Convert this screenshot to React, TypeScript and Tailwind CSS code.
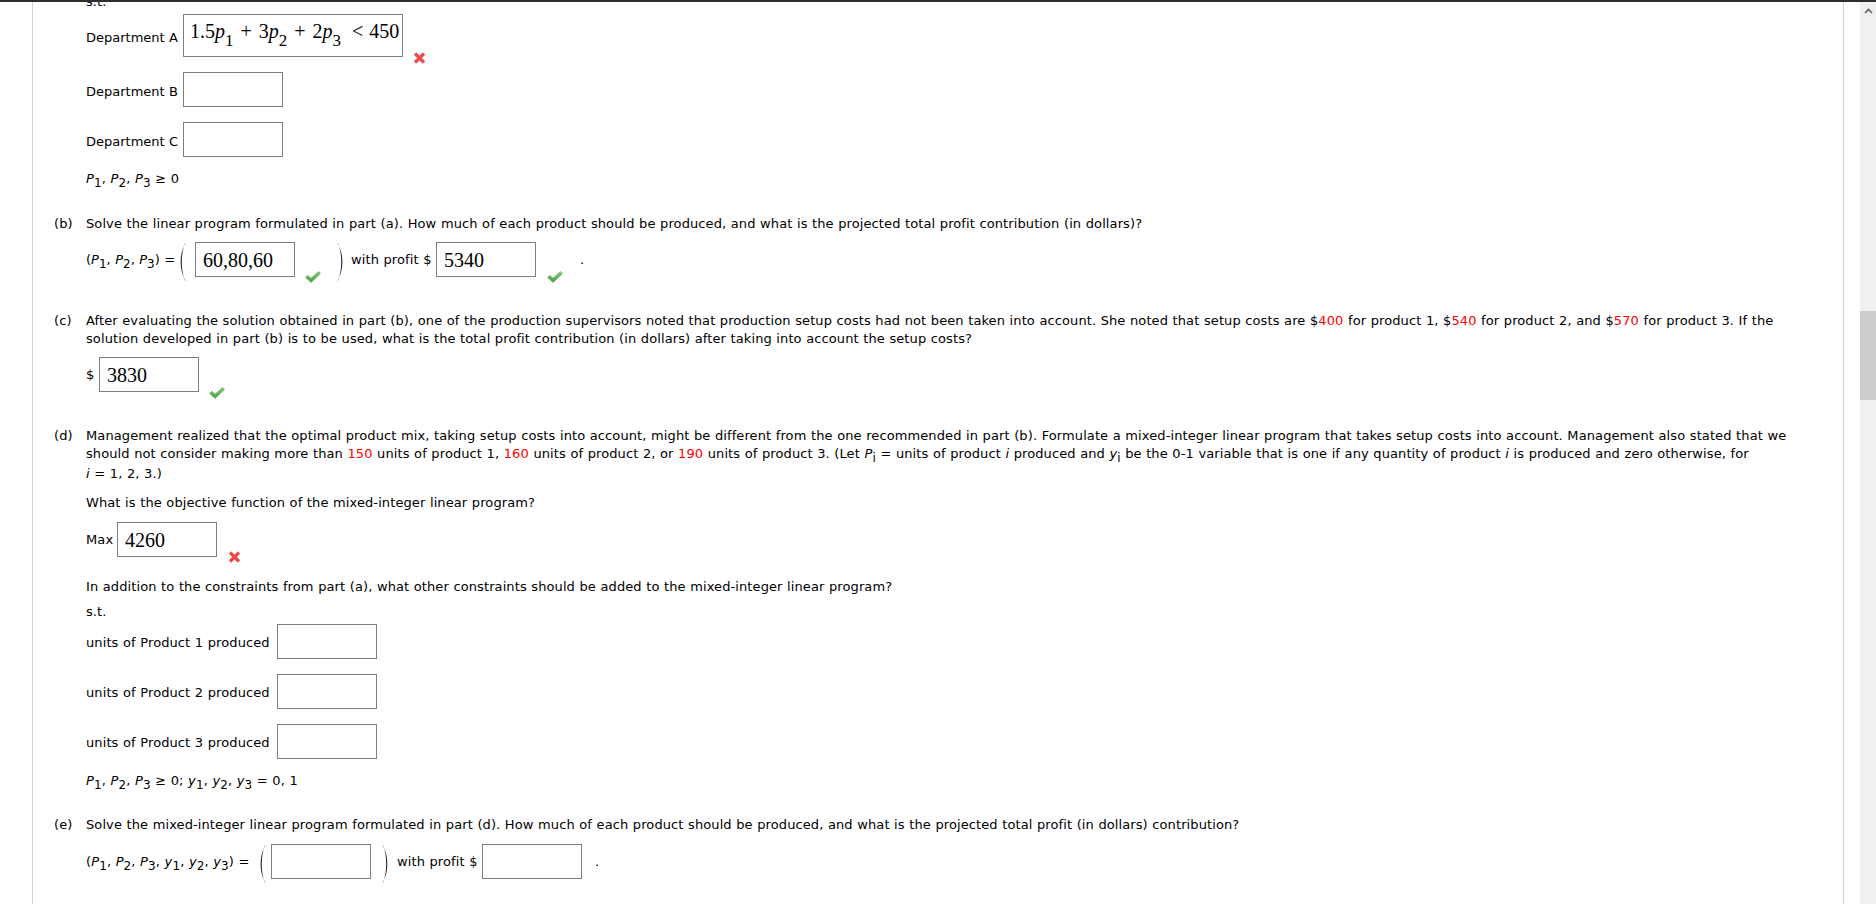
import React from "react";

// ─── small bits ───────────────────────────────────────────────
function Sub({ children }: { children: React.ReactNode }) {
  return <span className="relative top-[4px] text-[12px] leading-none not-italic">{children}</span>;
}

function V({ v, s }: { v: string; s: string }) {
  return (
    <>
      <i>{v}</i>
      <Sub>{s}</Sub>
    </>
  );
}

function Red({ children }: { children: React.ReactNode }) {
  return <span className="text-[#ff0000]">{children}</span>;
}

function Box({ children }: { children?: React.ReactNode }) {
  return (
    <div className="w-[100px] h-[35px] shrink-0 border border-[#7f7f7f] flex items-center pl-[7px] font-['Liberation_Serif',serif] text-[20px] leading-[20px] tracking-normal [word-spacing:0] whitespace-nowrap">
      {children}
    </div>
  );
}

function Check({ className }: { className?: string }) {
  return (
    <svg width="16" height="12" viewBox="0 0 16 12" className={className}>
      <defs>
        <linearGradient id="chk" x1="0" y1="0" x2="0" y2="1">
          <stop offset="0" stopColor="#86cf76" />
          <stop offset="1" stopColor="#45a03f" />
        </linearGradient>
      </defs>
      <path d="M0.6 6.4 L2.9 4.3 L6 7.2 L13.6 0.4 L15.6 2.4 L6.1 11.6 Z" fill="url(#chk)" stroke="#4f9f48" strokeWidth="0.5" />
    </svg>
  );
}

function Cross({ className }: { className?: string }) {
  return (
    <svg width="13" height="12" viewBox="0 0 13 12" className={className}>
      <path d="M2 1.5 L11 10.5 M11 1.5 L2 10.5" stroke="#ea4a4a" strokeWidth="3.2" fill="none" />
    </svg>
  );
}

function LeftParen({ className }: { className?: string }) {
  return (
    <svg width="8" height="38" viewBox="0 0 8 38" className={className}>
      <path d="M7.5 0.5 C1 10 1 28 7.5 37.5 L7 37.5 C2.7 28 2.7 10 7 0.5 Z" fill="#222" />
    </svg>
  );
}

function RightParen({ className }: { className?: string }) {
  return (
    <svg width="8" height="38" viewBox="0 0 8 38" className={className}>
      <path d="M0.5 0.5 C7 10 7 28 0.5 37.5 L1 37.5 C5.3 28 5.3 10 1 0.5 Z" fill="#222" />
    </svg>
  );
}

function MathSub({ children }: { children: React.ReactNode }) {
  return <span className="relative top-[8px] text-[17px] leading-none">{children}</span>;
}

// ─── page ─────────────────────────────────────────────────────
export default function App() {
  return (
    <div className="w-[1876px] h-[904px] overflow-hidden bg-white flex flex-col font-['DejaVu_Sans',Verdana,sans-serif] text-[13px] tracking-[0.1px] [word-spacing:0.3px] text-black">
      <div className="h-[2px] shrink-0 bg-[#2b2d33]" />
      <div className="flex flex-1 min-h-0">
        <div className="w-[32px] shrink-0" />
        <main className="w-[1812px] shrink-0 border-x border-l-[#d4d4d4] border-r-[#d0d0d0] pl-[21px] overflow-hidden">
          <div className="ml-[32px] mt-[-9px] h-[18px] leading-[18px]">s.t.</div>

          {/* department constraints */}
          <div className="ml-[32px] mt-[3px] flex items-center h-[43px]">
            <span className="w-[97px] shrink-0 pr-[6px] pt-[4px] text-right whitespace-nowrap leading-[18px] tracking-normal">Department A</span>
            <div className="w-[220px] h-[43px] shrink-0 border border-[#7f7f7f] pl-[6px] pt-[6px] font-['Liberation_Serif',serif] text-[20px] leading-[20px] tracking-normal [word-spacing:0] whitespace-nowrap">
              1.5<i>p</i>
              <MathSub>1</MathSub>
              <span className="mx-[7px]">+</span>3<i>p</i>
              <MathSub>2</MathSub>
              <span className="mx-[7px]">+</span>2<i>p</i>
              <MathSub>3</MathSub>
              <span className="ml-[11px] mr-[6px]">&lt;</span>450
            </div>
            <Cross className="self-end ml-[10px] -mb-[7px]" />
          </div>

          <div className="ml-[32px] mt-[15px] flex items-center h-[35px]">
            <span className="w-[97px] shrink-0 pr-[6px] pt-[4px] text-right whitespace-nowrap leading-[18px] tracking-normal">Department B</span>
            <Box />
          </div>

          <div className="ml-[32px] mt-[15px] flex items-center h-[35px]">
            <span className="w-[97px] shrink-0 pr-[6px] pt-[4px] text-right whitespace-nowrap leading-[18px] tracking-normal">Department C</span>
            <Box />
          </div>

          <div className="ml-[32px] mt-[13px] h-[18px] leading-[18px] whitespace-nowrap">
            <V v="P" s="1" />, <V v="P" s="2" />, <V v="P" s="3" /> ≥ 0
          </div>

          {/* (b) */}
          <div className="mt-[27px] flex">
            <span className="w-[32px] shrink-0 leading-[18px]">(b)</span>
            <div className="flex flex-col">
              <div className="h-[18px] leading-[18px] whitespace-nowrap">
                Solve the linear program formulated in part (a). How much of each product should be produced, and what is the projected total profit contribution (in dollars)?
              </div>
              <div className="mt-[9px] flex items-center h-[35px]">
                <span className="w-[92px] shrink-0 whitespace-nowrap leading-[18px] tracking-normal">
                  (<V v="P" s="1" />, <V v="P" s="2" />, <V v="P" s="3" />) =
                </span>
                <LeftParen className="self-start mt-[1px] mr-[9px] shrink-0" />
                <Box>60,80,60</Box>
                <Check className="self-end ml-[10px] -mb-[6px] shrink-0" />
                <RightParen className="self-start mt-[1px] ml-[16px] mr-[6px] shrink-0" />
                <span className="w-[85px] shrink-0 whitespace-nowrap leading-[18px]">with profit $</span>
                <Box>5340</Box>
                <Check className="self-end ml-[11px] -mb-[6px] shrink-0" />
                <span className="ml-[17px] leading-[18px]">.</span>
              </div>
            </div>
          </div>

          {/* (c) */}
          <div className="mt-[35px] flex">
            <span className="w-[32px] shrink-0 leading-[18px]">(c)</span>
            <div className="flex flex-col">
              <div className="h-[18px] leading-[18px] whitespace-nowrap">
                After evaluating the solution obtained in part (b), one of the production supervisors noted that production setup costs had not been taken into account. She noted that setup costs are $<Red>400</Red> for product 1, $<Red>540</Red> for product 2, and $<Red>570</Red> for product 3. If the
              </div>
              <div className="h-[18px] leading-[18px] whitespace-nowrap">
                solution developed in part (b) is to be used, what is the total profit contribution (in dollars) after taking into account the setup costs?
              </div>
              <div className="mt-[9px] flex items-center h-[35px]">
                <span className="w-[13px] shrink-0 leading-[18px]">$</span>
                <Box>3830</Box>
                <Check className="self-end ml-[10px] -mb-[7px] shrink-0" />
              </div>
            </div>
          </div>

          {/* (d) */}
          <div className="mt-[35px] flex">
            <span className="w-[32px] shrink-0 leading-[18px]">(d)</span>
            <div className="flex flex-col">
              <div className="h-[18px] leading-[18px] whitespace-nowrap">
                Management realized that the optimal product mix, taking setup costs into account, might be different from the one recommended in part (b). Formulate a mixed-integer linear program that takes setup costs into account. Management also stated that we
              </div>
              <div className="h-[20px] leading-[18px] whitespace-nowrap">
                should not consider making more than <Red>150</Red> units of product 1, <Red>160</Red> units of product 2, or <Red>190</Red> units of product 3. (Let <V v="P" s="i" /> = units of product <i>i</i> produced and <V v="y" s="i" /> be the 0-1 variable that is one if any quantity of product <i>i</i> is produced and zero otherwise, for
              </div>
              <div className="h-[18px] leading-[18px] whitespace-nowrap">
                <i>i</i> = 1, 2, 3.)
              </div>

              <div className="mt-[11px] h-[18px] leading-[18px] whitespace-nowrap">
                What is the objective function of the mixed-integer linear program?
              </div>
              <div className="mt-[10px] flex items-center h-[35px]">
                <span className="w-[31px] shrink-0 leading-[18px]">Max</span>
                <Box>4260</Box>
                <Cross className="self-end ml-[11px] -mb-[6px] shrink-0" />
              </div>

              <div className="mt-[21px] h-[18px] leading-[18px] whitespace-nowrap">
                In addition to the constraints from part (a), what other constraints should be added to the mixed-integer linear program?
              </div>
              <div className="mt-[7px] h-[18px] leading-[18px]">s.t.</div>

              <div className="mt-[3px] flex items-center h-[35px]">
                <span className="w-[191px] shrink-0 pt-[3px] whitespace-nowrap leading-[18px]">units of Product 1 produced</span>
                <Box />
              </div>
              <div className="mt-[15px] flex items-center h-[35px]">
                <span className="w-[191px] shrink-0 pt-[3px] whitespace-nowrap leading-[18px]">units of Product 2 produced</span>
                <Box />
              </div>
              <div className="mt-[15px] flex items-center h-[35px]">
                <span className="w-[191px] shrink-0 pt-[3px] whitespace-nowrap leading-[18px]">units of Product 3 produced</span>
                <Box />
              </div>

              <div className="mt-[13px] h-[18px] leading-[18px] whitespace-nowrap">
                <V v="P" s="1" />, <V v="P" s="2" />, <V v="P" s="3" /> ≥ 0; <V v="y" s="1" />, <V v="y" s="2" />, <V v="y" s="3" /> = 0, 1
              </div>
            </div>
          </div>

          {/* (e) */}
          <div className="mt-[26px] flex">
            <span className="w-[32px] shrink-0 leading-[18px]">(e)</span>
            <div className="flex flex-col">
              <div className="h-[18px] leading-[18px] whitespace-nowrap">
                Solve the mixed-integer linear program formulated in part (d). How much of each product should be produced, and what is the projected total profit (in dollars) contribution?
              </div>
              <div className="mt-[10px] flex items-center h-[35px]">
                <span className="w-[172px] shrink-0 whitespace-nowrap leading-[18px]">
                  (<V v="P" s="1" />, <V v="P" s="2" />, <V v="P" s="3" />, <V v="y" s="1" />, <V v="y" s="2" />, <V v="y" s="3" />) =
                </span>
                <LeftParen className="self-start mt-[1px] mr-[5px] shrink-0" />
                <Box />
                <RightParen className="self-start mt-[1px] ml-[11px] mr-[7px] shrink-0" />
                <span className="w-[85px] shrink-0 whitespace-nowrap leading-[18px]">with profit $</span>
                <Box />
                <span className="ml-[13px] leading-[18px]">.</span>
              </div>
            </div>
          </div>
        </main>
        <div className="w-[16px] shrink-0" />

        {/* scrollbar */}
        <div className="w-[16px] shrink-0 bg-[#f0f0f0] flex flex-col">
          <div className="h-[17px] flex items-center justify-center">
            <svg width="9" height="6" viewBox="0 0 9 6">
              <path d="M1 5 L4.5 1.5 L8 5" stroke="#606060" strokeWidth="1.6" fill="none" />
            </svg>
          </div>
          <div className="h-[292px]" />
          <div className="h-[89px] bg-[#cdcdcd]" />
        </div>
      </div>
    </div>
  );
}
